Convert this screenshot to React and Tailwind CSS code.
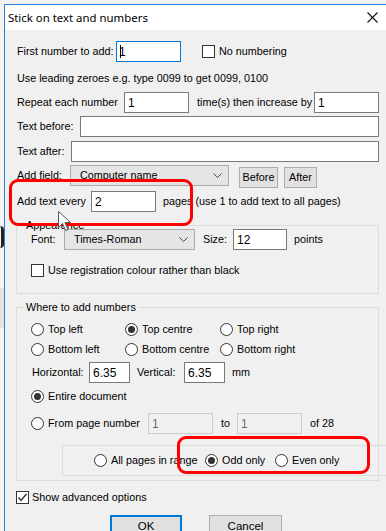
import React from "react";

const F = { fontFamily: '"Liberation Sans", Arial, sans-serif' };

function Radio({ checked }) {
  return (
    <span className="flex-none w-[13px] h-[13px] rounded-full border border-[#333] bg-white flex items-center justify-center">
      {checked && <span className="w-[7px] h-[7px] rounded-full bg-[#333]" />}
    </span>
  );
}

function Check({ checked }) {
  return (
    <span className="flex-none w-[13px] h-[13px] border border-[#333] bg-white flex items-center justify-center">
      {checked && (
        <svg width="11" height="11" viewBox="0 0 11 11">
          <polyline points="1.5,5.5 4,8.5 9.5,2" fill="none" stroke="#333" strokeWidth="1.4" />
        </svg>
      )}
    </span>
  );
}

function Input({ w, value, focused, disabled, h = 21, caret }) {
  return (
    <div
      className={
        "flex-none flex items-center pl-[3px] border " +
        (focused
          ? "border-[#0078d7] bg-white text-black"
          : disabled
          ? "border-[#cccccc] bg-[#f0f0f0] text-[#6d6d6d]"
          : "border-[#7a7a7a] bg-white text-black")
      }
      style={{ width: w, height: h }}
    >
      {caret && <span className="w-px h-[13px] bg-black -mr-[2px]" />}
      <span className="text-[12px]">{value}</span>
    </div>
  );
}

function Select({ w, value }) {
  return (
    <div
      className="flex-none flex items-center justify-between pl-[9px] pr-[6px] h-[21px] border border-[#acacac] bg-[#e5e5e5]"
      style={{ width: w }}
    >
      <span>{value}</span>
      <svg width="9" height="6" viewBox="0 0 9 6">
        <polyline points="0.5,0.5 4.5,4.5 8.5,0.5" fill="none" stroke="#444" strokeWidth="1" />
      </svg>
    </div>
  );
}

function Btn({ w, children }) {
  return (
    <div
      className="flex-none flex items-center justify-center h-[21px] bg-[#e1e1e1] border border-[#adadad]"
      style={{ width: w }}
    >
      {children}
    </div>
  );
}

export default function App() {
  return (
    <div className="relative w-[386px] h-[531px] overflow-hidden bg-[#f2f2f2] flex items-start text-[10.8px] text-black" style={F}>
      {/* background strip of the window behind */}
      <div className="flex-none w-[4px] h-[531px] flex flex-col bg-[#f4f4f4]">
        <div className="flex-none mt-[226px] w-[4px] h-[22px] rounded-r-full border-r-[3px] border-[#222]" />
        <div className="flex-none mt-[40px] w-[4px] h-[40px] bg-[#e2e2e2]" />
      </div>

      {/* dialog */}
      <div className="flex-none w-[420px] mt-[4px] border-l border-t border-[#2a7fd2] bg-[#f0f0f0] flex flex-col">
        {/* title bar */}
        <div className="flex-none h-[25px] bg-white flex items-center justify-between pl-[3px] pr-[46px]">
          <span className="text-[11.4px] text-black" style={{ fontFamily: '"Noto Sans", "Open Sans", sans-serif' }}>
            Stick on text and numbers
          </span>
          <svg width="11" height="11" viewBox="0 0 11 11">
            <path d="M0.5 0.5 L10.5 10.5 M10.5 0.5 L0.5 10.5" stroke="#111" strokeWidth="1.1" />
          </svg>
        </div>

        {/* body */}
        <div className="flex-none pl-[11px] pb-[20px] flex flex-col">
          {/* row 1 */}
          <div className="flex-none mt-[11px] h-[21px] flex items-center">
            <span className="w-[100px] pl-px">First number to add:</span>
            <Input w={65} value="1" focused caret />
            <span className="ml-[21px]"><Check /></span>
            <span className="ml-[4px]">No numbering</span>
          </div>

          {/* row 2 */}
          <div className="flex-none mt-[8px] h-[16px] flex items-center pl-px">
            Use leading zeroes e.g. type 0099 to get 0099, 0100
          </div>

          {/* row 3 */}
          <div className="flex-none mt-[6px] h-[21px] flex items-center">
            <span className="w-[108px] pl-px">Repeat each number</span>
            <Input w={65} value="1" />
            <span className="w-[125px] pl-[8px]">time(s) then increase by</span>
            <Input w={65} value="1" />
          </div>

          {/* row 4 */}
          <div className="flex-none mt-[3px] h-[21px] flex items-center">
            <span className="w-[64px] pl-px">Text before:</span>
            <Input w={299} value="" />
          </div>

          {/* row 5 */}
          <div className="flex-none mt-[4px] h-[21px] flex items-center">
            <span className="w-[55px] pl-px">Text after:</span>
            <Input w={308} value="" />
          </div>

          {/* row 6 */}
          <div className="flex-none mt-[3px] h-[23px] flex items-start">
            <span className="w-[54px] pl-px h-[21px] flex items-center">Add field:</span>
            <Select w={159} value="Computer name" />
            <div className="ml-[10px] mt-[2px] flex gap-[6px]">
              <Btn w={39}>Before</Btn>
              <Btn w={33}>After</Btn>
            </div>
          </div>

          {/* row 7 */}
          <div className="flex-none mt-[3px] h-[21px] flex items-center">
            <span className="w-[75px] pl-px">Add text every</span>
            <Input w={65} value="2" />
            <span className="ml-[7px]">pages (use 1 to add text to all pages)</span>
          </div>

          {/* Appearance group */}
          <div className="flex-none mt-[13px] w-[363px] h-[69px] border border-[#dcdcdc] flex flex-col">
            <span className="flex-none -mt-[8px] ml-[7px] px-[2px] w-fit bg-[#f0f0f0] h-[14px] leading-[14px]">Appearance</span>
            <div className="flex-none mt-[-3px] h-[21px] flex items-center pl-[14px]">
              <span className="w-[33px]">Font:</span>
              <Select w={131} value="Times-Roman" />
              <span className="w-[38px] pl-[8px]">Size:</span>
              <Input w={54} value="12" />
              <span className="ml-[7px]">points</span>
            </div>
            <div className="flex-none mt-[13px] h-[14px] flex items-center pl-[14px]">
              <Check />
              <span className="ml-[4px]">Use registration colour rather than black</span>
            </div>
          </div>

          {/* Where group */}
          <div className="flex-none mt-[13px] w-[363px] h-[174px] border border-[#dcdcdc] flex flex-col">
            <span className="flex-none -mt-[8px] ml-[7px] px-[2px] w-fit bg-[#f0f0f0] h-[14px] leading-[14px]">Where to add numbers</span>
            <div className="flex-none mt-[8px] h-[14px] flex items-center pl-[14px]">
              <div className="w-[94px] flex items-center gap-[4px]"><Radio /><span>Top left</span></div>
              <div className="w-[95px] flex items-center gap-[4px]"><Radio checked /><span>Top centre</span></div>
              <div className="flex items-center gap-[4px]"><Radio /><span>Top right</span></div>
            </div>
            <div className="flex-none mt-[6px] h-[14px] flex items-center pl-[14px]">
              <div className="w-[94px] flex items-center gap-[4px]"><Radio /><span>Bottom left</span></div>
              <div className="w-[95px] flex items-center gap-[4px]"><Radio /><span>Bottom centre</span></div>
              <div className="flex items-center gap-[4px]"><Radio /><span>Bottom right</span></div>
            </div>
            <div className="flex-none mt-[6px] h-[21px] flex items-center pl-[15px]">
              <span className="w-[57px]">Horizontal:</span>
              <Input w={41} value="6.35" />
              <span className="w-[54px] pl-[7px]">Vertical:</span>
              <Input w={41} value="6.35" />
              <span className="ml-[7px]">mm</span>
            </div>
            <div className="flex-none mt-[6px] h-[14px] flex items-center pl-[14px] gap-[4px]">
              <Radio checked /><span>Entire document</span>
            </div>
            <div className="flex-none mt-[10px] h-[21px] flex items-center pl-[14px]">
              <div className="w-[117px] flex items-center gap-[4px]"><Radio /><span>From page number</span></div>
              <Input w={65} value="1" disabled />
              <span className="w-[24px] pl-[8px]">to</span>
              <Input w={65} value="1" disabled />
              <span className="ml-[8px]">of 28</span>
            </div>
            <div className="flex-none mt-[11px] ml-[45px] w-[340px] h-[31px] border border-[#dcdcdc] flex items-center pl-[31px]">
              <div className="w-[111px] flex items-center gap-[4px]"><Radio /><span>All pages in range</span></div>
              <div className="w-[70px] flex items-center gap-[4px]"><Radio checked /><span>Odd only</span></div>
              <div className="flex items-center gap-[4px]"><Radio /><span>Even only</span></div>
            </div>
          </div>

          {/* Show advanced */}
          <div className="flex-none mt-[10px] h-[13px] flex items-center gap-[3px]">
            <Check checked /><span>Show advanced options</span>
          </div>

          {/* buttons */}
          <div className="flex-none mt-[11px] flex pl-[94px] gap-[27px]">
            <div className="w-[72px] h-[23px] border-2 border-[#0078d7] bg-[#e1e1e1] flex items-center justify-center text-[11.5px]">OK</div>
            <div className="w-[73px] h-[23px] border border-[#adadad] bg-[#e1e1e1] flex items-center justify-center text-[11.5px]">Cancel</div>
          </div>
        </div>
      </div>

      {/* red highlight overlays */}
      <div className="absolute left-[9px] top-[179px] w-[184px] h-[47px] border-[3px] border-[#ff0000] rounded-[9px]" />
      <div className="absolute left-[177px] top-[436px] w-[193px] h-[38px] border-[3px] border-[#ff0000] rounded-[9px]" />

      {/* mouse cursor */}
      <svg className="absolute left-[58px] top-[211px]" width="14" height="21" viewBox="0 0 14 21">
        <path d="M0.5 0.5 L0.5 16.5 L4.5 12.5 L7.5 19.5 L10 18.5 L7 11.5 L12.5 11.5 Z" fill="#fff" stroke="#555" strokeWidth="1" />
      </svg>
    </div>
  );
}
